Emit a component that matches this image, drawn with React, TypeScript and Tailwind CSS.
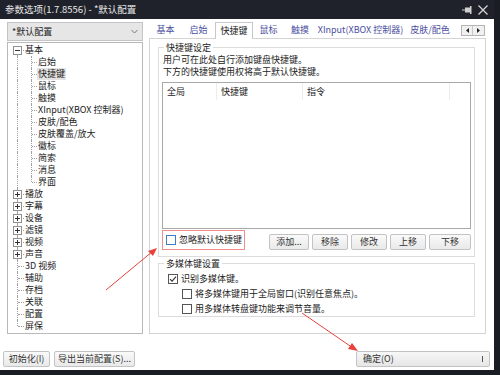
import React from 'react';

const basicChildren = [
  '启始',
  '快捷键',
  '鼠标',
  '触摸',
  'XInput(XBOX 控制器)',
  '皮肤/配色',
  '皮肤覆盖/放大',
  '徽标',
  '简索',
  '消息',
  '界面',
];

const topItems: { label: string; expandable: boolean }[] = [
  { label: '播放', expandable: true },
  { label: '字幕', expandable: true },
  { label: '设备', expandable: true },
  { label: '滤镜', expandable: true },
  { label: '视频', expandable: true },
  { label: '声音', expandable: true },
  { label: '3D 视频', expandable: false },
  { label: '辅助', expandable: false },
  { label: '存档', expandable: false },
  { label: '关联', expandable: false },
  { label: '配置', expandable: false },
  { label: '屏保', expandable: false },
];

const tabs = [
  { label: '基本', w: 'w-[33px]' },
  { label: '启始', w: 'w-[33px]' },
  { label: '快捷键', w: 'w-[38px]', active: true },
  { label: '鼠标', w: 'w-[31px]' },
  { label: '触摸', w: 'w-[32px]' },
  { label: 'XInput(XBOX 控制器)', w: 'w-[89px]' },
  { label: '皮肤/配色', w: 'w-[50px]' },
];

function ExpandBox({ open }: { open: boolean }) {
  return (
    <div className="absolute left-[5px] top-[2px] w-[9px] h-[9px] border border-[#919191] bg-white flex items-center justify-center">
      <div className="w-[5px] h-px bg-[#333]" />
      {!open && <div className="absolute w-px h-[5px] bg-[#333]" />}
    </div>
  );
}

// one row of the top level of the tree
function TopRow({ label, expandable, open = false, first = false, last = false }: {
  label: string;
  expandable: boolean;
  open?: boolean;
  first?: boolean;
  last?: boolean;
}) {
  return (
    <div className="flex items-center h-[12px]">
      <div className="relative w-[16px] h-[12px] shrink-0">
        <div
          className={`absolute left-[9px] w-0 border-l border-dotted border-[#a0a0a0] ${
            first ? 'top-[6px] bottom-0' : last ? 'top-0 h-[6px]' : 'top-0 bottom-0'
          }`}
        />
        <div className="absolute left-[10px] top-[6px] w-[6px] h-0 border-t border-dotted border-[#a0a0a0]" />
        {expandable && <ExpandBox open={open} />}
      </div>
      <span className="pl-[1px] leading-[12px]">{label}</span>
    </div>
  );
}

function ChildRow({ label, last, selected }: { label: string; last: boolean; selected: boolean }) {
  return (
    <div className="flex items-center h-[12px]">
      <div className="relative w-[29px] h-[12px] shrink-0">
        <div className="absolute left-[9px] top-0 bottom-0 w-0 border-l border-dotted border-[#a0a0a0]" />
        <div
          className={`absolute left-[23px] w-0 border-l border-dotted border-[#a0a0a0] ${
            last ? 'top-0 h-[6px]' : 'top-0 bottom-0'
          }`}
        />
        <div className="absolute left-[24px] top-[6px] w-[5px] h-0 border-t border-dotted border-[#a0a0a0]" />
      </div>
      <span className={`leading-[12px] px-[1px] ${selected ? 'bg-[#e3e3e3]' : ''}`}>{label}</span>
    </div>
  );
}

function Checkbox({ checked = false, focus = false }: { checked?: boolean; focus?: boolean }) {
  return (
    <div
      className={`w-[10px] h-[10px] shrink-0 border bg-white flex items-center justify-center ${
        focus ? 'border-[#3b7fc4]' : 'border-[#555]'
      }`}
    >
      {checked && (
        <svg width="8" height="8" viewBox="0 0 8 8">
          <path d="M1 4.2 L3.1 6.2 L7 1.6" fill="none" stroke="#333" strokeWidth="1.1" />
        </svg>
      )}
    </div>
  );
}

function Btn({ children, className = '' }: { children: React.ReactNode; className?: string }) {
  return (
    <div
      className={`h-[16px] flex items-center justify-center border border-[#c3c3c3] rounded-[2px] bg-gradient-to-b from-[#fafafa] to-[#e9e9e9] text-[#333] whitespace-nowrap ${className}`}
    >
      {children}
    </div>
  );
}

export default function App() {
  return (
    <div className="relative w-[500px] h-[375px] overflow-hidden bg-[#1b1d24] font-['Microsoft_YaHei','Noto_Sans_CJK_SC',sans-serif] text-[9px] text-[#222]">
      <div className="w-[494px] h-[370px] flex flex-col bg-white">
        {/* title bar */}
        <div className="h-[19px] shrink-0 bg-[#1f222a] flex items-center pl-[5px] pr-[6px] text-[#e8e8e8] text-[9.5px]">
          <span>参数选项(1.7.8556) - *默认配置</span>
          <div className="ml-auto flex items-center gap-[5px]">
            <svg width="11" height="8" viewBox="0 0 11 8">
              <rect x="3" y="1.5" width="5" height="5" fill="#cfcfcf" />
              <rect x="8" y="0" width="1.5" height="8" fill="#cfcfcf" />
              <rect x="0" y="3.5" width="3" height="1" fill="#cfcfcf" />
            </svg>
            <svg width="10" height="10" viewBox="0 0 10 10">
              <path d="M0.5 0.5 L9.5 9.5 M9.5 0.5 L0.5 9.5" stroke="#d8d8d8" strokeWidth="1.2" />
            </svg>
          </div>
        </div>

        {/* body */}
        <div className="flex pl-[7px] h-[315px]">
          {/* left column */}
          <div className="w-[136px] shrink-0 flex flex-col pt-[3px]">
            <div className="h-[19px] border border-[#c4c4c4] bg-[#e6e6e6] flex items-center pl-[4px] pr-[4px] text-[#222]">
              <span>*默认配置</span>
              <svg className="ml-auto" width="7" height="5" viewBox="0 0 7 5">
                <path d="M0.5 1 L3.5 4 L6.5 1" fill="none" stroke="#777" strokeWidth="1" />
              </svg>
            </div>
            <div className="mt-px h-[294px] border border-[#b9b9b9] bg-white pt-[1px]">
              <TopRow label="基本" expandable open first />
              {basicChildren.map((c, i) => (
                <ChildRow key={c} label={c} last={i === basicChildren.length - 1} selected={c === '快捷键'} />
              ))}
              {topItems.map((t, i) => (
                <TopRow key={t.label} label={t.label} expandable={t.expandable} last={i === topItems.length - 1} />
              ))}
            </div>
          </div>

          {/* right column */}
          <div className="ml-[6px] w-[337px] shrink-0 flex flex-col">
            <div className="h-[19px] flex items-end">
              {tabs.map((t) =>
                t.active ? (
                  <div
                    key={t.label}
                    className={`${t.w} h-[17px] -mb-px z-10 relative bg-white border border-b-0 border-[#c8c8c8] flex items-center justify-center text-[#222]`}
                  >
                    {t.label}
                  </div>
                ) : (
                  <div key={t.label} className={`${t.w} h-[17px] flex items-center justify-center text-[#4a4e9e] whitespace-nowrap`}>
                    {t.label}
                  </div>
                )
              )}
              <div className="ml-[6px] mb-[2px] flex border border-[#b5b5b5] bg-[#f0f0f0] h-[11px]">
                <div className="w-[11px] flex items-center justify-center border-r border-[#c8c8c8]">
                  <svg width="3" height="5" viewBox="0 0 3 5"><path d="M3 0 L0 2.5 L3 5 Z" fill="#222" /></svg>
                </div>
                <div className="w-[11px] flex items-center justify-center">
                  <svg width="3" height="5" viewBox="0 0 3 5"><path d="M0 0 L3 2.5 L0 5 Z" fill="#222" /></svg>
                </div>
              </div>
            </div>

            <div className="h-[297px] border border-[#d4d4d4] bg-white pl-[8px] pr-[10px] pt-[4px]">
              <fieldset className="border border-[#dcdcdc] h-[214px] px-[3px]">
                <legend className="ml-[2px] px-[2px] text-[#222] leading-[10px]">快捷键设定</legend>
                <div className="text-[#222] leading-[12px] pl-[1px] mt-[1px]">
                  <div>用户可在此处自行添加键盘快捷键。</div>
                  <div>下方的快捷键使用权将高于默认快捷键。</div>
                </div>
                <div className="mt-[4px] h-[147px] border border-[#a9a9a9] bg-white">
                  <div className="flex h-[17px] items-center text-[#222]">
                    <div className="w-[54px] pl-[4px] border-r border-[#ececec] h-full flex items-center">全局</div>
                    <div className="w-[86px] pl-[4px] border-r border-[#ececec] h-full flex items-center">快捷键</div>
                    <div className="w-[147px] pl-[4px] border-r border-[#ececec] h-full flex items-center">指令</div>
                  </div>
                </div>
                <div className="flex items-center mt-[1px]">
                  <div className="w-[83px] h-[20px] border border-[#f28b8b] flex items-center pl-[3px] gap-[3px] whitespace-nowrap">
                    <Checkbox focus />
                    <span>忽略默认快捷键</span>
                  </div>
                  <div className="ml-auto flex gap-[3px] mt-[4px]">
                    <Btn className="w-[40px]">添加...</Btn>
                    <Btn className="w-[36px]">移除</Btn>
                    <Btn className="w-[36px]">修改</Btn>
                    <Btn className="w-[36px]">上移</Btn>
                    <Btn className="w-[42px]">下移</Btn>
                  </div>
                </div>
              </fieldset>

              <fieldset className="mt-[2px] border border-[#dcdcdc] h-[58px] px-[3px]">
                <legend className="ml-[2px] px-[2px] text-[#222] leading-[10px]">多媒体键设置</legend>
                <div className="flex flex-col gap-[3px] mt-[4px] leading-[12px]">
                  <div className="flex items-center gap-[3px] pl-[6px]">
                    <Checkbox checked />
                    <span>识别多媒体键。</span>
                  </div>
                  <div className="flex items-center gap-[3px] pl-[20px]">
                    <Checkbox />
                    <span>将多媒体键用于全局窗口(识别任意焦点)。</span>
                  </div>
                  <div className="flex items-center gap-[3px] pl-[20px]">
                    <Checkbox />
                    <span>用多媒体转盘键功能来调节音量。</span>
                  </div>
                </div>
              </fieldset>
            </div>
          </div>
        </div>

        {/* bottom buttons */}
        <div className="flex items-center pl-[3px] pr-[4px] mt-[17px]">
          <Btn className="w-[47px]">初始化(I)</Btn>
          <Btn className="w-[81px] ml-[4px]">导出当前配置(S)...</Btn>
          <div className="ml-auto w-[134px] h-[16px] border border-[#c3c3c3] rounded-[2px] bg-gradient-to-b from-[#f7f7f7] to-[#e6e6e6] flex items-center pl-[6px] pr-[6px] text-[#333]">
            <span>确定(O)</span>
            <div className="ml-auto w-px h-[6px] bg-[#555]" />
          </div>
        </div>
      </div>

      {/* red annotation arrows */}
      <svg className="absolute inset-0 pointer-events-none" width="500" height="375" viewBox="0 0 500 375">
        <line x1="106" y1="290" x2="153" y2="251" stroke="#e8413c" strokeWidth="1" />
        <path d="M157 248 L148 251 L153 256 Z" fill="#e8413c" />
        <line x1="302" y1="313" x2="353" y2="348" stroke="#e8413c" strokeWidth="1" />
        <path d="M358 351 L348 349 L352 343 Z" fill="#e8413c" />
      </svg>
    </div>
  );
}
